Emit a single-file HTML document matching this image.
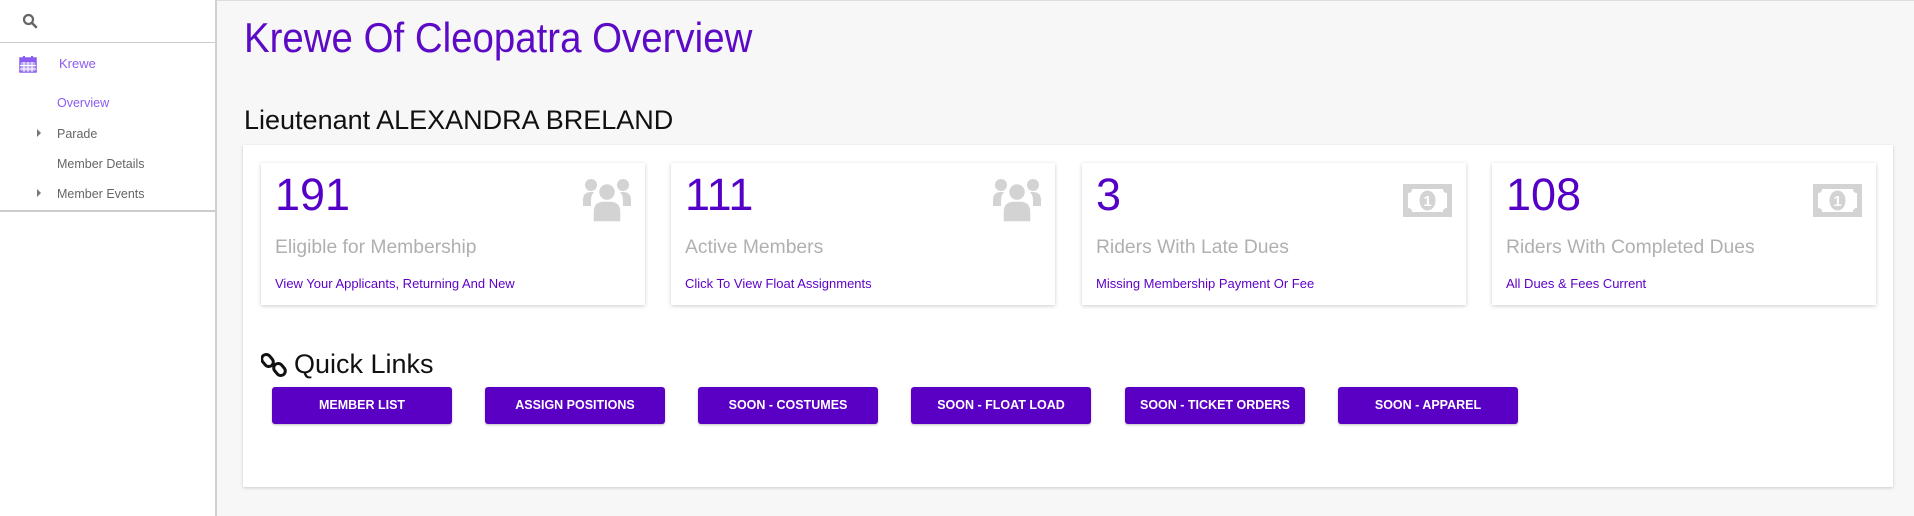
<!DOCTYPE html>
<html><head><meta charset="utf-8">
<style>
*{box-sizing:border-box;margin:0;padding:0}
body{width:1914px;height:516px;background:#f7f7f7;font-family:"Liberation Sans",sans-serif;position:relative;overflow:hidden}
.side{position:absolute;left:0;top:0;width:217px;height:516px;background:#fff;border-right:2px solid #d0d0d0}
.side .s1{position:absolute;left:0;top:0;width:215px;height:43px;border-bottom:1px solid #ccc}
.side .s2{position:absolute;left:0;top:210px;width:215px;border-bottom:2px solid #ccc}
.nav{position:absolute;font-size:12.5px;color:#666}
.tri{position:absolute;width:0;height:0;border-top:4px solid transparent;border-bottom:4px solid transparent;border-left:4px solid #777}
.topline{position:absolute;left:217px;top:0;right:0;height:1px;background:#ddd}
h1{position:absolute;left:244px;top:14px;font-size:42px;font-weight:normal;color:#5c0ac6;transform:scaleX(0.915);transform-origin:0 0;white-space:nowrap}
h2{position:absolute;left:244px;top:105px;font-size:27px;font-weight:normal;color:#111}
.panel{position:absolute;left:243px;top:145px;width:1650px;height:342px;background:#fff;box-shadow:0 1px 3px rgba(0,0,0,.18)}
.card{position:absolute;top:163px;width:384px;height:142px;background:#fff;box-shadow:0 1px 4px rgba(0,0,0,.2)}
.num{position:absolute;left:14px;top:6px;font-size:45px;color:#5500c6}
.lab{position:absolute;left:14px;top:74px;font-size:19.3px;color:#b0b0b0}
.lnk{position:absolute;left:14px;top:113px;font-size:13px;color:#5c00c7}
.ic{position:absolute;right:14px;top:15px}
.ql{position:absolute;left:294px;top:349px;font-size:27px;color:#111}
.btn{position:absolute;top:387px;width:180px;height:37px;background:#5a00c4;border-radius:3px;color:#fff;font-weight:bold;font-size:12.5px;text-align:center;line-height:37px;box-shadow:0 1px 2px rgba(0,0,0,.25)}
</style></head><body>
<div class="side">
  <div class="s1"></div>
  <svg style="position:absolute;left:22px;top:13px" width="16" height="16" viewBox="0 0 16 16"><circle cx="6.5" cy="6.5" r="4.5" fill="none" stroke="#666" stroke-width="2.2"/><line x1="10" y1="10" x2="14" y2="14" stroke="#666" stroke-width="2.6" stroke-linecap="round"/></svg>
  <svg style="position:absolute;left:19px;top:55px" width="18" height="18" viewBox="0 0 18 18"><rect x="1" y="3" width="16" height="14" fill="#b8a4f0" stroke="#8b5cf0" stroke-width="1.5"/><rect x="1" y="3" width="16" height="4" fill="#8b5cf0"/><rect x="4" y="1" width="2" height="4" fill="#8b5cf0"/><rect x="12" y="1" width="2" height="4" fill="#8b5cf0"/><path d="M5 7v10M9 7v10M13 7v10M1 10.5h16M1 14h16" stroke="#fff" stroke-width="1"/></svg>
  <div class="nav" style="left:59px;top:56px;color:#8b5cf0;font-size:13px">Krewe</div>
  <div class="nav" style="left:57px;top:96px;color:#8b5cf0">Overview</div>
  <div class="tri" style="left:37px;top:129px"></div>
  <div class="nav" style="left:57px;top:127px">Parade</div>
  <div class="nav" style="left:57px;top:157px">Member Details</div>
  <div class="tri" style="left:37px;top:189px"></div>
  <div class="nav" style="left:57px;top:187px">Member Events</div>
  <div class="s2"></div>
</div>
<div class="topline"></div>
<h1>Krewe Of Cleopatra Overview</h1>
<h2>Lieutenant ALEXANDRA BRELAND</h2>
<div class="panel"></div>

<div class="card" style="left:261px"><div class="num">191</div><div class="lab">Eligible for Membership</div><div class="lnk">View Your Applicants, Returning And New</div>
<svg class="ic" width="48" height="46" viewBox="0 0 48 46"><g fill="#d3d3d3"><circle cx="8" cy="7" r="6"/><circle cx="40" cy="7" r="6"/><path d="M0 22q0-8 8-8h3q-3 3-3 9v5H0z"/><path d="M48 22q0-8-8-8h-3q3 3 3 9v5h8z"/><circle cx="24" cy="14" r="8.5" stroke="#fff" stroke-width="1.5"/><path d="M10 44V34q0-11 11-11h6q11 0 11 11v10z" stroke="#fff" stroke-width="1.5"/></g></svg></div>

<div class="card" style="left:671px"><div class="num">111</div><div class="lab">Active Members</div><div class="lnk">Click To View Float Assignments</div>
<svg class="ic" width="48" height="46" viewBox="0 0 48 46"><g fill="#d3d3d3"><circle cx="8" cy="7" r="6"/><circle cx="40" cy="7" r="6"/><path d="M0 22q0-8 8-8h3q-3 3-3 9v5H0z"/><path d="M48 22q0-8-8-8h-3q3 3 3 9v5h8z"/><circle cx="24" cy="14" r="8.5" stroke="#fff" stroke-width="1.5"/><path d="M10 44V34q0-11 11-11h6q11 0 11 11v10z" stroke="#fff" stroke-width="1.5"/></g></svg></div>

<div class="card" style="left:1082px"><div class="num">3</div><div class="lab">Riders With Late Dues</div><div class="lnk">Missing Membership Payment Or Fee</div>
<svg class="ic" style="top:21px" width="49" height="33" viewBox="0 0 49 33"><rect width="49" height="33" fill="#d3d3d3"/><path d="M9 5h31q0 4 4 4v15q-4 0-4 4H9q0-4-4-4V9q4 0 4-4z" fill="#fff"/><ellipse cx="24.5" cy="16.5" rx="8" ry="10" fill="#d3d3d3"/><text x="24.5" y="22" text-anchor="middle" font-size="15" font-weight="bold" fill="#fff" font-family="Liberation Sans">1</text></svg></div>

<div class="card" style="left:1492px"><div class="num">108</div><div class="lab">Riders With Completed Dues</div><div class="lnk">All Dues &amp; Fees Current</div>
<svg class="ic" style="top:21px" width="49" height="33" viewBox="0 0 49 33"><rect width="49" height="33" fill="#d3d3d3"/><path d="M9 5h31q0 4 4 4v15q-4 0-4 4H9q0-4-4-4V9q4 0 4-4z" fill="#fff"/><ellipse cx="24.5" cy="16.5" rx="8" ry="10" fill="#d3d3d3"/><text x="24.5" y="22" text-anchor="middle" font-size="15" font-weight="bold" fill="#fff" font-family="Liberation Sans">1</text></svg></div>

<svg style="position:absolute;left:261px;top:352px" width="26" height="26" viewBox="0 0 26 26"><g fill="none" stroke="#111" stroke-width="3"><rect x="2" y="2" width="9" height="13" rx="4.5" transform="rotate(-40 6.5 8.5)"/><rect x="14" y="11" width="9" height="13" rx="4.5" transform="rotate(-40 18.5 17.5)"/></g></svg>
<div class="ql">Quick Links</div>
<div class="btn" style="left:272px">MEMBER LIST</div>
<div class="btn" style="left:485px">ASSIGN POSITIONS</div>
<div class="btn" style="left:698px">SOON - COSTUMES</div>
<div class="btn" style="left:911px">SOON - FLOAT LOAD</div>
<div class="btn" style="left:1125px">SOON - TICKET ORDERS</div>
<div class="btn" style="left:1338px">SOON - APPAREL</div>
</body></html>
